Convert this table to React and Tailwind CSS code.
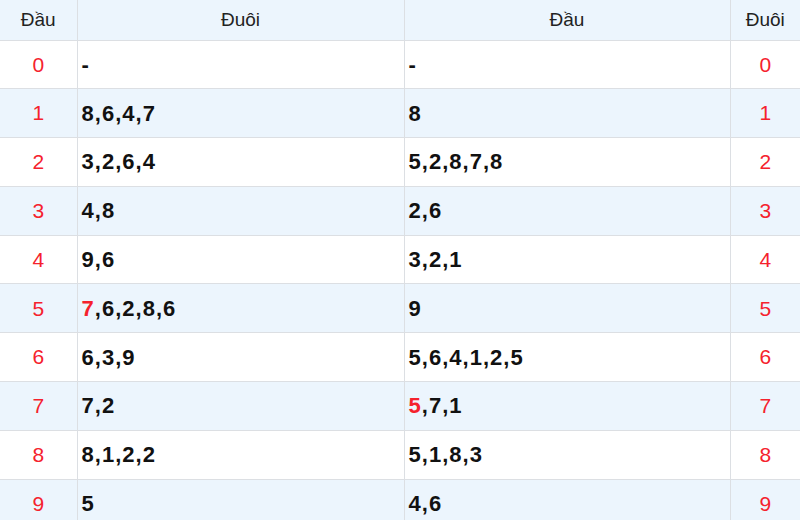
const dau = [
  ['-'],
  ['8', '6', '4', '7'],
  ['3', '2', '6', '4'],
  ['4', '8'],
  ['9', '6'],
  ['*7', '6', '2', '8', '6'],
  ['6', '3', '9'],
  ['7', '2'],
  ['8', '1', '2', '2'],
  ['5'],
];

const duoi = [
  ['-'],
  ['8'],
  ['5', '2', '8', '7', '8'],
  ['2', '6'],
  ['3', '2', '1'],
  ['9'],
  ['5', '6', '4', '1', '2', '5'],
  ['*5', '7', '1'],
  ['5', '1', '8', '3'],
  ['4', '6'],
];

// a leading * marks a number shown in red
const Nums = ({ list }) => (
  <>
    {list.map((n, i) => (
      <span key={i}>
        {i > 0 && ','}
        {n[0] === '*' ? <span className="text-[#f5222d]">{n.slice(1)}</span> : n}
      </span>
    ))}
  </>
);

const App = () => {
  return (
    <div className="w-[800px] h-[520px] overflow-hidden bg-white font-['Liberation_Sans',Arial,sans-serif]">
      <table className="w-[800px] border-collapse table-fixed">
        <colgroup>
          <col className="w-[77px]" />
          <col className="w-[327px]" />
          <col className="w-[326px]" />
          <col className="w-[70px]" />
        </colgroup>
        <thead>
          <tr className="h-[40px] bg-[#ecf5fd] text-[19px] text-[#222]">
            <th className="font-normal border-r border-b border-[#dcdfe3]">Đầu</th>
            <th className="font-normal border-r border-b border-[#dcdfe3]">Đuôi</th>
            <th className="font-normal border-r border-b border-[#dcdfe3]">Đầu</th>
            <th className="font-normal border-b border-[#dcdfe3]">Đuôi</th>
          </tr>
        </thead>
        <tbody>
          {dau.map((row, i) => (
            <tr key={i} className={`h-[48.8px] ${i % 2 === 1 ? 'bg-[#ecf5fd]' : 'bg-white'}`}>
              <td className="text-center text-[21px] text-[#f5222d] border-r border-b border-[#dcdfe3]">{i}</td>
              <td className="pl-[4px] text-[22px] tracking-[1px] font-bold text-[#111] border-r border-b border-[#dcdfe3]">
                <Nums list={row} />
              </td>
              <td className="pl-[4px] text-[22px] tracking-[1px] font-bold text-[#111] border-r border-b border-[#dcdfe3]">
                <Nums list={duoi[i]} />
              </td>
              <td className="text-center text-[21px] text-[#f5222d] border-b border-[#dcdfe3]">{i}</td>
            </tr>
          ))}
        </tbody>
      </table>
    </div>
  );
};

export default App;
